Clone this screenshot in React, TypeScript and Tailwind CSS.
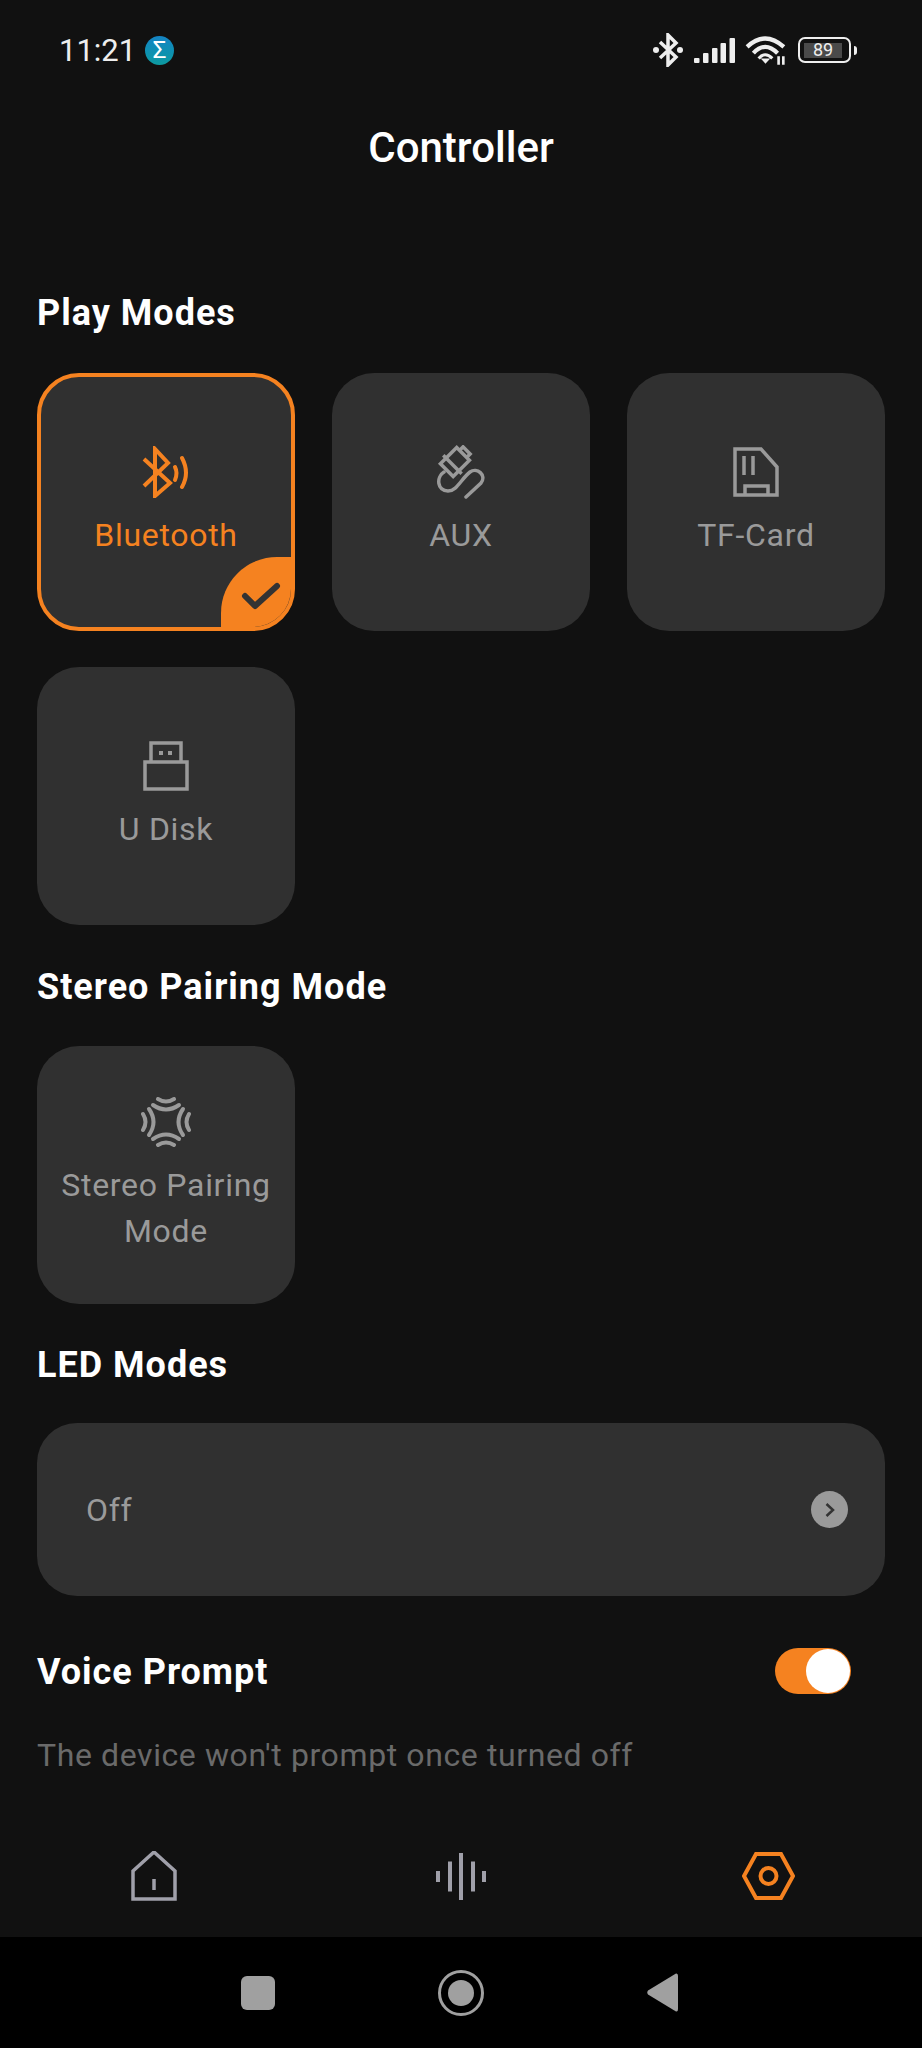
import type { ReactNode } from "react";

const ORANGE = "#f58220";
const GREY = "#9a9a9a";

function BluetoothIcon() {
  return (
    <svg width="48" height="52" viewBox="0 0 48 52" fill="none" stroke={ORANGE} strokeWidth="4" strokeLinejoin="miter">
      <path d="M2 13 L28 37 L13 50 V3 L26 17 L2 40" />
      <path d="M33 21 Q36 27 33 34" strokeLinecap="round" />
      <path d="M40 12 Q48 27 40 41" strokeLinecap="round" />
    </svg>
  );
}

function AuxIcon() {
  return (
    <svg width="48" height="54" viewBox="0 0 48 54" fill="none" stroke={GREY} strokeWidth="3.5">
      <g transform="rotate(45 19 16)">
        <rect x="10" y="6" width="18" height="23" />
        <path d="M14 6 V1 H24 V6" />
        <path d="M6 21 H32" />
      </g>
      <path d="M7 27 C-1 32 0 46 11 46 C20 46 24 34 33 27 C40 22 50 30 44 38 L29 52" strokeLinecap="round" />
    </svg>
  );
}

function CardIcon() {
  return (
    <svg width="46" height="50" viewBox="0 0 46 50" fill="none" stroke={GREY} strokeWidth="3.5">
      <path d="M2 2 H28 L44 20 V48 H2 Z" />
      <path d="M11 9 V28 M20 9 V28" />
      <path d="M12 48 V39 H35 V48" />
    </svg>
  );
}

function DiskIcon() {
  return (
    <svg width="46" height="50" viewBox="0 0 46 50" fill="none" stroke={GREY} strokeWidth="3.5">
      <path d="M8 21 V2 H38 V21" />
      <rect x="2" y="21" width="42" height="27" />
      <rect x="16" y="10" width="4" height="4" fill={GREY} stroke="none" />
      <rect x="25" y="10" width="4" height="4" fill={GREY} stroke="none" />
    </svg>
  );
}

function PairIcon() {
  return (
    <svg width="50" height="50" viewBox="0 0 50 50" fill="none" stroke={GREY} strokeWidth="4" strokeLinecap="round">
      {[0, 90, 180, 270].map((deg) => (
        <g key={deg} transform={`rotate(${deg} 25 25)`}>
          <path d="M17 2 Q25 7 33 2" />
          <path d="M12 8 Q25 17 38 8" />
        </g>
      ))}
    </svg>
  );
}

function ModeCard({ icon, label, active }: { icon: ReactNode; label: ReactNode; active?: boolean }) {
  return (
    <div
      className={`relative h-[258px] w-[258px] overflow-hidden rounded-[42px] bg-[#303030] ${
        active ? "border-[4px] border-[#f58220]" : ""
      }`}
    >
      <div className={`flex h-full flex-col items-center ${active ? "pt-[69px]" : "pt-[73px]"}`}>
        <div className="flex h-[52px] items-center justify-center">{icon}</div>
        <div
          className={`mt-[14px] text-center text-[32px] leading-[46px] tracking-[0.7px] ${
            active ? "text-[#f58220]" : "text-[#9a9a9a]"
          }`}
        >
          {label}
        </div>
      </div>
      {active && (
        <div className="absolute -right-[4px] -bottom-[4px] flex h-[74px] w-[74px] items-center justify-center rounded-tl-[56px] bg-[#f58220] pt-[3px] pl-[6px]">
          <svg width="40" height="30" viewBox="0 0 40 30" fill="none" stroke="#333" strokeWidth="6" strokeLinecap="round" strokeLinejoin="round">
            <path d="M4 15 L14 25 L36 5" />
          </svg>
        </div>
      )}
    </div>
  );
}

function SectionTitle({ children }: { children: ReactNode }) {
  return <h2 className="h-[46px] text-[36px] leading-[48px] font-bold tracking-[1px] text-white">{children}</h2>;
}

function StatusBar() {
  return (
    <div className="flex h-[100px] items-center justify-between pr-[65px] pl-[59px] text-white">
      <div className="flex items-center gap-[9px]">
        <span className="text-[31px] leading-none text-[#eeeeee]">11:21</span>
        <span className="flex h-[29px] w-[29px] items-center justify-center rounded-full bg-gradient-to-b from-[#1583c4] to-[#0e9aa0] text-[24px] leading-none text-white">
          Σ
        </span>
      </div>
      <div className="flex items-center">
        <svg width="30" height="34" viewBox="0 0 30 34" fill="none" stroke="#eee" strokeWidth="3.5">
          <path d="M7 9 L23 24 L15 32 V2 L23 10 L7 25" />
          <circle cx="3" cy="17" r="3" fill="#eee" stroke="none" />
          <circle cx="27" cy="17" r="3" fill="#eee" stroke="none" />
        </svg>
        <svg className="ml-[11px]" width="41" height="26" viewBox="0 0 41 26" fill="#eee">
          <rect x="0" y="21" width="5.5" height="5" rx="1" />
          <rect x="9" y="16" width="5.5" height="10" rx="1" />
          <rect x="18" y="11" width="5.5" height="15" rx="1" />
          <rect x="26.5" y="6" width="5.5" height="20" rx="1" />
          <rect x="35.5" y="1" width="5.5" height="25" rx="1" />
        </svg>
        <svg className="ml-[10px]" width="42" height="30" viewBox="0 0 40 28" fill="none" stroke="#eee" strokeWidth="4">
          <path d="M2 11 Q19 -5 37 11" />
          <path d="M8 17 Q19 5 31 17" />
          <path d="M13 22 Q19 15 26 22" strokeWidth="3" />
          <path d="M15 22 L19.5 27 L24 22 Z" fill="#eee" stroke="none" />
          <path d="M32 20 V28 M36.5 20 V28" strokeWidth="2.5" />
        </svg>
        <div className="ml-[11px] flex h-[26px] w-[53px] items-center rounded-[7px] border-[2px] border-[#eeeeee] px-[4px]">
          <span className="flex h-[15px] w-[38px] items-center justify-center bg-[#4a4a4a] text-[18px] leading-none text-[#eeeeee]">
            89
          </span>
        </div>
        <span className="ml-[3px] h-[9px] w-[3px] rounded-r-sm bg-[#eeeeee]" />
      </div>
    </div>
  );
}

function BottomNav() {
  return (
    <div className="grid h-[112px] grid-cols-3 place-items-center bg-[#111111] pb-[10px]">
      <svg width="46" height="50" viewBox="0 0 46 50" fill="none" stroke="#a0a0aa" strokeWidth="3.5">
        <path d="M2 48 V20 L23 1 L44 20 V48 Z" />
        <path d="M23 28 V39" />
      </svg>
      <svg width="50" height="47" viewBox="0 0 50 47" fill="#a0a0aa">
        <rect x="0" y="18" width="4" height="11" />
        <rect x="12" y="8.5" width="4" height="30" />
        <rect x="23" y="0" width="4" height="47" />
        <rect x="35" y="8.5" width="4" height="30" />
        <rect x="46" y="18" width="4" height="11" />
      </svg>
      <svg width="53" height="48" viewBox="0 0 53 48" fill="none" stroke={ORANGE} strokeWidth="4">
        <path d="M14 2 H39 L51 24 L39 46 H14 L2 24 Z" />
        <circle cx="26.5" cy="24" r="8" />
      </svg>
    </div>
  );
}

function SystemNav() {
  return (
    <div className="flex h-[111px] items-center justify-center gap-[163px] bg-black pr-[3px]">
      <span className="h-[34px] w-[34px] rounded-[6px] bg-[#a0a0a0]" />
      <svg width="46" height="46" viewBox="0 0 46 46" fill="none">
        <circle cx="23" cy="23" r="21.5" stroke="#a0a0a0" strokeWidth="3" />
        <circle cx="23" cy="23" r="13" fill="#a0a0a0" />
      </svg>
      <svg width="31" height="39" viewBox="0 0 31 39" fill="#a0a0a0">
        <path d="M29 0.5 Q31 0 31 3 V36 Q31 39 29 38.5 L1 21.5 Q-0.5 19.5 1 17.5 Z" />
      </svg>
    </div>
  );
}

export default function App() {
  return (
    <div className="flex h-[2048px] w-[922px] flex-col overflow-hidden bg-[#111111] [font-family:Roboto,sans-serif]">
      <StatusBar />
      <h1 className="mt-[25px] text-center text-[42px] leading-[46px] font-medium text-white">Controller</h1>

      <main className="flex flex-1 flex-col px-[37px] pt-[118px]">
        <SectionTitle>Play Modes</SectionTitle>
        <div className="mt-[38px] grid grid-cols-[258px_258px_258px] gap-x-[37px] gap-y-[36px]">
          <ModeCard active icon={<BluetoothIcon />} label="Bluetooth" />
          <ModeCard icon={<AuxIcon />} label="AUX" />
          <ModeCard icon={<CardIcon />} label="TF-Card" />
          <ModeCard icon={<DiskIcon />} label="U Disk" />
        </div>

        <div className="mt-[38px]">
          <SectionTitle>Stereo Pairing Mode</SectionTitle>
        </div>
        <div className="mt-[37px] flex h-[258px] w-[258px] flex-col items-center rounded-[42px] bg-[#303030] pt-[51px]">
          <PairIcon />
          <div className="mt-[15px] text-center text-[32px] leading-[46px] tracking-[0.7px] text-[#9a9a9a]">
            Stereo Pairing
            <br />
            Mode
          </div>
        </div>

        <div className="mt-[37px]">
          <SectionTitle>LED Modes</SectionTitle>
        </div>
        <div className="mt-[36px] flex h-[173px] items-center justify-between rounded-[40px] bg-[#303030] pr-[37px] pl-[49px]">
          <span className="text-[32px] tracking-[0.7px] text-[#9a9a9a]">Off</span>
          <span className="flex h-[37px] w-[37px] items-center justify-center rounded-full bg-[#9a9a9a]">
            <svg width="12" height="16" viewBox="0 0 12 16" fill="none" stroke="#333" strokeWidth="2.5">
              <path d="M2.5 2 L9 8 L2.5 14" />
            </svg>
          </span>
        </div>

        <div className="mt-[52px] flex h-[46px] items-center justify-between pr-[34px]">
          <SectionTitle>Voice Prompt</SectionTitle>
          <div className="flex h-[46px] w-[76px] items-center justify-end rounded-full bg-[#f58220] pr-[1px]">
            <span className="h-[44px] w-[44px] rounded-full bg-white" />
          </div>
        </div>
        <p className="mt-[37px] h-[46px] text-[32px] leading-[48px] tracking-[0.6px] text-[#6a6a6a]">
          The device won't prompt once turned off
        </p>
      </main>

      <BottomNav />
      <SystemNav />
    </div>
  );
}
